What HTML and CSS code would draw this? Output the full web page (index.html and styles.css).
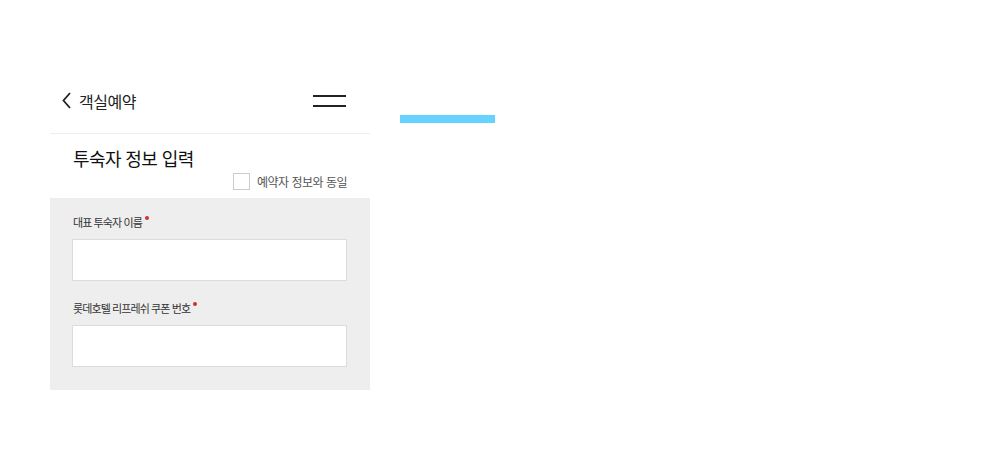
FILE: index.html
```html
<!DOCTYPE html>
<html lang="ko">
<head>
<meta charset="utf-8">
<link rel="stylesheet" href="styles.css">
</head>
<body>
<div class="page">
  <div class="app">
    <header class="header">
      <div class="header-left">
        <svg class="back" width="9" height="17" viewBox="0 0 9 17"><path d="M8 1 L1.5 8.5 L8 16" fill="none" stroke="#222" stroke-width="1.8"/></svg>
        <span class="header-title">객실예약</span>
      </div>
      <div class="menu"><span></span><span></span></div>
    </header>
    <section class="guest">
      <h2 class="section-title">투숙자 정보 입력</h2>
      <label class="same">
        <span class="checkbox"></span>
        <span class="same-text">예약자 정보와 동일</span>
      </label>
    </section>
    <div class="panel">
      <div class="field">
        <div class="field-label required">대표 투숙자 이름</div>
        <div class="input"></div>
      </div>
      <div class="field">
        <div class="field-label required">롯데호텔 리프레쉬 쿠폰 번호</div>
        <div class="input"></div>
      </div>
    </div>
  </div>
  <div class="bar"></div>
</div>
</body>
</html>
```
FILE: styles.css
```css
* { box-sizing: border-box; }
html, body { margin: 0; padding: 0; background: #fff; }
body {
  font-family: "Noto Sans CJK KR", "Noto Sans", sans-serif;
  color: #222;
}
.page {
  display: flex;
  align-items: flex-start;
  padding: 75px 0 0 50px;
}
.app { width: 320px; }
.header {
  height: 59px;
  padding: 0 24px 7px 12px;
  border-bottom: 1px solid #efefef;
  display: flex;
  align-items: center;
  justify-content: space-between;
}
.header-left { display: flex; align-items: center; }
.back { display: block; margin-right: 8px; }
.header-title { font-size: 16px; line-height: 20px; color: #222; letter-spacing: -0.5px; }
.menu { display: flex; flex-direction: column; gap: 8px; }
.menu span { display: block; width: 33px; height: 2px; background: #222; }
.guest { padding: 12px 23px 8px 23px; }
.section-title {
  margin: 0;
  font-size: 18px;
  line-height: 24px;
  font-weight: 400;
  color: #111;
  letter-spacing: -0.6px;
}
.same {
  display: flex;
  justify-content: flex-end;
  align-items: center;
  margin-top: 3px;
}
.checkbox {
  width: 17px;
  height: 17px;
  border: 1px solid #ccc;
  background: #fff;
  margin-right: 7px;
}
.same-text { font-size: 12px; color: #555; letter-spacing: -0.5px; line-height: 17px; }
.panel {
  background: #eeeeee;
  padding: 16px 23px 23px 22px;
}
.field + .field { margin-top: 19px; }
.field-label {
  font-size: 11px;
  line-height: 16px;
  color: #333;
  letter-spacing: -0.9px;
  margin-bottom: 9px;
  padding-left: 1px;
}
.required::after {
  content: "";
  display: inline-block;
  width: 4px;
  height: 4px;
  border-radius: 50%;
  background: #d32f2f;
  vertical-align: top;
  margin-left: 3px;
  margin-top: 2px;
}
.input {
  height: 42px;
  background: #fff;
  border: 1px solid #dcdcdc;
}
.bar {
  width: 95px;
  height: 8px;
  background: #66d3ff;
  margin: 40px 0 0 30px;
}
```
